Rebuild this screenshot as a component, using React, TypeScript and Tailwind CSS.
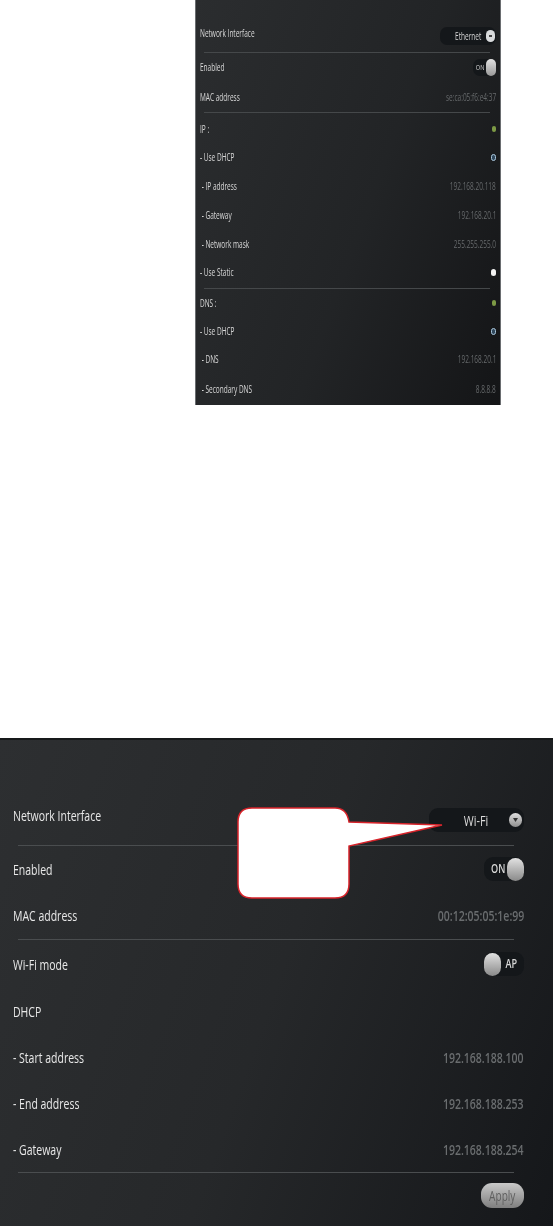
import React from "react";

type Row = {
  label?: string;
  value?: string;
  kind?: "line" | "select" | "on" | "ap" | "green" | "blue" | "white";
  m: string;
};

const small: Row[] = [
  { label: "Network Interface", kind: "select", value: "Ethernet", m: "mt-0" },
  { kind: "line", m: "mt-[9px]" },
  { label: "Enabled", kind: "on", m: "mt-[4px]" },
  { label: "MAC address", value: "se:ca:05:f6:e4:37", m: "mt-[10px]" },
  { kind: "line", m: "mt-[5px]" },
  { label: "IP :", kind: "green", m: "mt-[6px]" },
  { label: "- Use DHCP", kind: "blue", m: "mt-[8px]" },
  { label: "\u00a0- IP address", value: "192.168.20.118", m: "mt-[9px]" },
  { label: "\u00a0- Gateway", value: "192.168.20.1", m: "mt-[9px]" },
  { label: "\u00a0- Network mask", value: "255.255.255.0", m: "mt-[9px]" },
  { label: "- Use Static", kind: "white", m: "mt-[8px]" },
  { kind: "line", m: "mt-[6px]" },
  { label: "DNS :", kind: "green", m: "mt-[4px]" },
  { label: "- Use DHCP", kind: "blue", m: "mt-[8px]" },
  { label: "\u00a0- DNS", value: "192.168.20.1", m: "mt-[8px]" },
  { label: "\u00a0- Secondary DNS", value: "8.8.8.8", m: "mt-[10px]" },
];

const large: Row[] = [
  { label: "Network Interface", kind: "select", value: "Wi-Fi", m: "mt-0" },
  { kind: "line", m: "mt-[15px]" },
  { label: "Enabled", kind: "on", m: "mt-[8px]" },
  { label: "MAC address", value: "00:12:05:05:1e:99", m: "mt-[16px]" },
  { kind: "line", m: "mt-[9px]" },
  { label: "Wi-Fi mode", kind: "ap", m: "mt-[9px]" },
  { label: "DHCP", m: "mt-[17px]" },
  { label: "- Start address", value: "192.168.188.100", m: "mt-[16px]" },
  { label: "- End address", value: "192.168.188.253", m: "mt-[16px]" },
  { label: "- Gateway", value: "192.168.188.254", m: "mt-[16px]" },
  { kind: "line", m: "mt-[8px]" },
];

function Ball({ big }: { big: boolean }) {
  return (
    <span
      className={
        big
          ? "block w-[17px] h-[23px] rounded-full bg-gradient-to-b from-[#e2e2e2] to-[#8a8a8a]"
          : "block w-[10px] h-[17px] rounded-full bg-gradient-to-b from-[#e2e2e2] to-[#999999]"
      }
    />
  );
}

function SmallControl({ row }: { row: Row }) {
  if (row.kind === "select")
    return (
      <div className="mt-[6px] w-[56px] h-[18px] rounded-[7px] bg-[#14171a] flex items-center justify-end pr-[1px] gap-[5px]">
        <span className="inline-block origin-right scale-x-[0.65] text-[10px] text-[#d4d4d4] whitespace-nowrap">{row.value}</span>
        <span className="w-[9px] h-[12px] rounded-full bg-[#d8dadc] flex items-center justify-center">
          <span className="w-[3px] h-[2px] bg-[#444444]" />
        </span>
      </div>
    );
  if (row.kind === "on")
    return (
      <div className="w-[23px] h-[17px] rounded-[7px] bg-[#14171a] flex items-center justify-end">
        <span className="text-[8px] text-[#d4d4d4] inline-block scale-x-[0.7]">ON</span>
        <Ball big={false} />
      </div>
    );
  if (row.kind === "green") return <span className="block w-[4px] h-[6px] rounded-full bg-[#7d9a45]" />;
  if (row.kind === "blue") return <span className="block w-[5px] h-[7px] rounded-full border-[1.5px] border-[#a9c6dc] bg-[#31485c]" />;
  if (row.kind === "white") return <span className="block w-[5px] h-[7px] rounded-full bg-[#f2f2f2]" />;
  return <span className="inline-block origin-right scale-x-[0.65] text-[10px] text-[#66696b] whitespace-nowrap">{row.value}</span>;
}

function LargeControl({ row }: { row: Row }) {
  if (row.kind === "select")
    return (
      <div className="mt-[10px] w-[95px] h-[24px] rounded-[9px] bg-[#14171a] flex items-center pr-[2px]">
        <span className="flex-1 text-center pl-[13px]">
          <span className="inline-block scale-x-[0.72] text-[15px] text-[#dcdcdc]">{row.value}</span>
        </span>
        <span className="w-[13px] h-[14px] rounded-full bg-gradient-to-b from-[#e0e0e0] to-[#8f8f8f] flex items-center justify-center">
          <svg width="5" height="4" viewBox="0 0 5 4"><path d="M0 0h5L2.500 4z" fill="#333333" /></svg>
        </span>
      </div>
    );
  if (row.kind === "on")
    return (
      <div className="w-[40px] h-[24px] rounded-[9px] bg-[#14171a] flex items-center justify-end">
        <span className="text-[13px] font-semibold text-[#d8d8d8] inline-block scale-x-[0.7] -mr-[1px]">ON</span>
        <Ball big />
      </div>
    );
  if (row.kind === "ap")
    return (
      <div className="w-[40px] h-[24px] rounded-[9px] bg-[#14171a] flex items-center">
        <Ball big />
        <span className="text-[13px] font-semibold text-[#d8d8d8] inline-block scale-x-[0.7] ml-[2px]">AP</span>
      </div>
    );
  if (!row.value) return null;
  return <span className="inline-block origin-right scale-x-[0.75] text-[14px] font-semibold text-[#6a6d6f] whitespace-nowrap">{row.value}</span>;
}

function SmallPanel() {
  return (
    <div className="ml-[195px] w-[306px] h-[405px] border-x border-[#6a6d70] bg-[linear-gradient(110deg,#2b2d2f,#222426_55%,#141517)] pt-[23px] pl-[4px] pr-[4px] blur-[0.4px]">
      {small.map((r, i) =>
        r.kind === "line" ? (
          <div key={i} className={`${r.m} h-px ml-[4px] mr-[6px] bg-[#45484a]`} />
        ) : (
          <div key={i} className={`${r.m} h-[20px] flex items-center justify-between`}>
            <span className="inline-block origin-left scale-x-[0.65] text-[10px] text-[#d8d8d8] whitespace-pre">{r.label}</span>
            <SmallControl row={r} />
          </div>
        )
      )}
    </div>
  );
}

function LargePanel() {
  return (
    <div className="relative mt-[333px] h-[488px] bg-[linear-gradient(110deg,#2d2f31,#26282a_50%,#15171a)] border-t-2 border-[#17191a] pt-[60px] pl-[13px] pr-[29px]">
      {large.map((r, i) =>
        r.kind === "line" ? (
          <div key={i} className={`${r.m} h-px ml-[5px] mr-[10px] bg-[#4a4d4f]`} />
        ) : (
          <div key={i} className={`${r.m} h-[30px] flex items-center justify-between`}>
            <span className="inline-block origin-left scale-x-[0.7] text-[15px] text-[#e8e8e8] whitespace-pre">{r.label}</span>
            <LargeControl row={r} />
          </div>
        )
      )}
      <div className="mt-[10px] flex justify-end">
        <button className="w-[43px] h-[25px] rounded-[11px] bg-gradient-to-b from-[#c9c9c9] to-[#7f7f7f] text-[#5f5f5f] flex items-center justify-center">
          <span className="inline-block scale-x-[0.72] text-[14px] leading-none">Apply</span>
        </button>
      </div>
      <svg className="absolute left-[236px] top-[66px]" width="210" height="94" viewBox="0 0 210 94">
        <path
          d="M16 2H99Q111 2 113 16L206 19L113 40V78Q113 92 99 92H16Q2 92 2 78V16Q2 2 16 2Z"
          fill="#ffffff"
          stroke="#d8232a"
          strokeWidth="1.500"
        />
      </svg>
    </div>
  );
}

export default function App() {
  return (
    <div className="w-[553px] h-[1226px] overflow-hidden bg-white font-['Open_Sans',sans-serif]">
      <SmallPanel />
      <LargePanel />
    </div>
  );
}
